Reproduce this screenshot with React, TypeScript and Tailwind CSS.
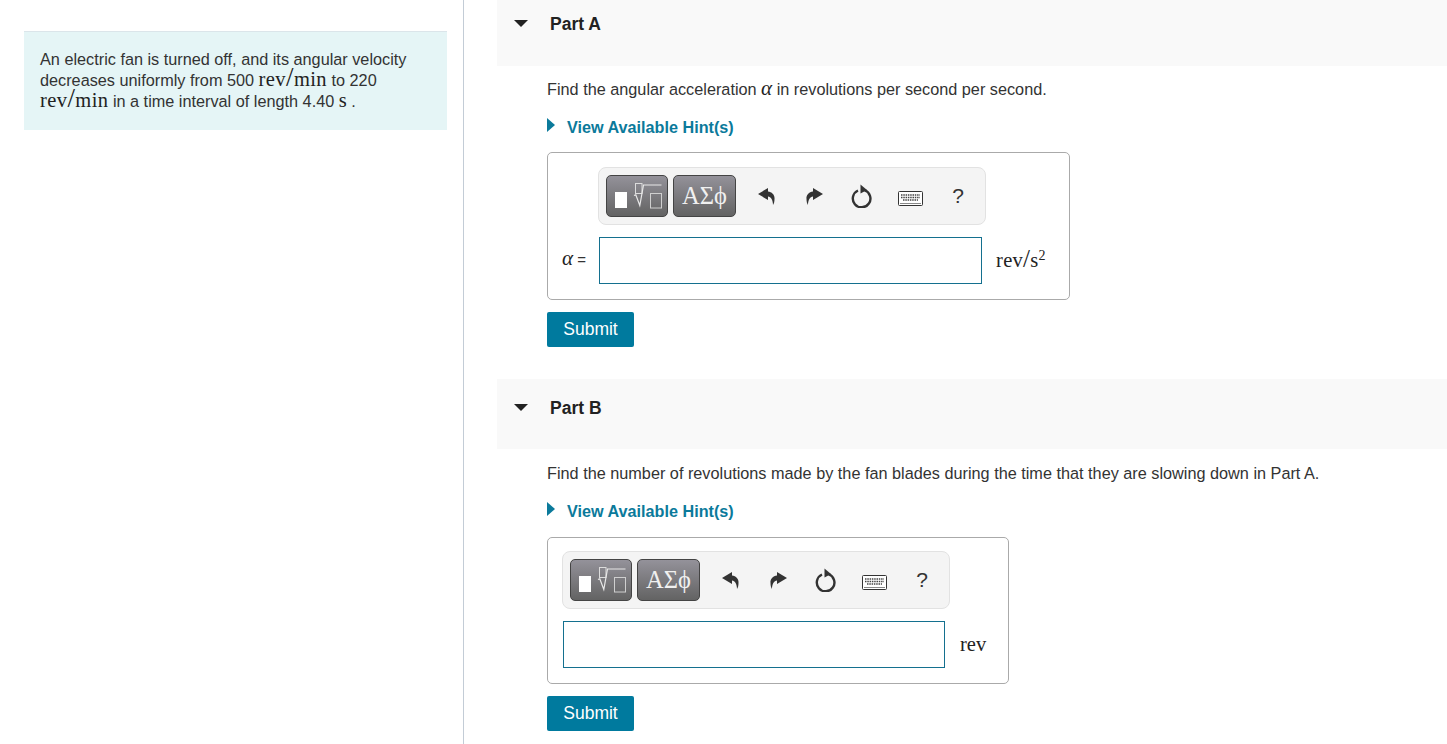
import React from 'react'

const mathFont = "font-['Liberation_Serif',serif] text-[#222]"

function TemplateIcon() {
  return (
    <svg width="60" height="40" viewBox="0 0 60 40" fill="none">
      <rect x="8" y="16" width="12" height="16" fill="#fff" />
      <rect x="28.500" y="7.500" width="6.500" height="10" stroke="#dcdcdc" />
      <path d="M27 19.500l1.800-.8 4 10.800 3.700-20.500h18" stroke="#e8e8e8" strokeWidth="1.200" />
      <rect x="43.500" y="17.500" width="11" height="14.500" stroke="#cfcfcf" />
    </svg>
  )
}

function UndoIcon({ flip }: { flip?: boolean }) {
  return (
    <svg width="17" height="17" viewBox="0 0 17 17" className={flip ? '-scale-x-100' : ''}>
      <path d="M0 6L10 0v3.500c4 .5 7 3.500 6.500 7.500 0 2.500-.5 4.500-1.500 6 0-5-2-8-5-8.500V12z" fill="#333" />
    </svg>
  )
}

function ResetIcon() {
  return (
    <svg width="22" height="24" viewBox="0 0 22 24" fill="none">
      <path d="M7 6.500a8.800 8.800 0 1 0 6.500-.3" stroke="#333" strokeWidth="2.400" />
      <path d="M9.500 .5l6.500 5.500-6.500 3.500z" fill="#333" />
    </svg>
  )
}

function KeyboardIcon() {
  return (
    <svg width="25" height="15" viewBox="0 0 25 15" fill="none" className="mt-[5px]">
      <rect x=".5" y=".5" width="24" height="14" rx="1" fill="#fff" stroke="#333" />
      <path d="M3 4h19M3 6.500h19" stroke="#444" strokeWidth="1.400" strokeDasharray="1.500 .8" />
      <path d="M5 9h15" stroke="#444" strokeWidth="1.400" strokeDasharray="1.500 .8" />
      <path d="M2 12.500h21" stroke="#888" />
    </svg>
  )
}

function Toolbar({ className }: { className: string }) {
  const btn = 'flex h-[42px] items-center justify-center rounded-[5px] border border-[#444] bg-linear-to-b from-[#94929a] to-[#636363]'
  const slot = 'flex w-[48px] items-center justify-center'
  return (
    <div className={`flex h-[58px] w-[388px] items-center rounded-lg border border-[#e2e2e2] bg-[#f4f4f4] pl-[7px] ${className}`}>
      <div className={`${btn} w-[62px]`}><TemplateIcon /></div>
      <div className={`${btn} ml-[5px] w-[63px] font-['Liberation_Serif',serif] text-[24.500px] text-[#f0f0f0]`}>ΑΣϕ</div>
      <div className="ml-[6px] flex">
        <div className={slot}><UndoIcon /></div>
        <div className={slot}><UndoIcon flip /></div>
        <div className={slot}><ResetIcon /></div>
        <div className={slot}><KeyboardIcon /></div>
        <div className={`${slot} text-[21px] text-[#333]`}>?</div>
      </div>
    </div>
  )
}

function Hint() {
  return (
    <div className="mt-[16px] flex h-[22px] items-center text-[16.200px] font-bold text-[#0b7a9b]">
      <svg width="8" height="14" viewBox="0 0 8 14" className="-mt-[4px]">
        <path d="M0 0l8 7-8 7z" fill="#0b7a9b" />
      </svg>
      <span className="ml-[12px]">View Available Hint(s)</span>
    </div>
  )
}

function PartHeader({ title, className }: { title: string; className: string }) {
  return (
    <div className={`flex items-start bg-[#f9f9f9] pl-[17px] ${className}`}>
      <svg width="14" height="7" viewBox="0 0 14 7" className="mt-[20px]">
        <path d="M0 0h14l-7 7z" fill="#222" />
      </svg>
      <span className="ml-[22px] mt-[12px] text-[17.500px] font-bold leading-[24px] text-[#222]">{title}</span>
    </div>
  )
}

function Submit() {
  return (
    <button className="mt-[12px] block h-[35px] w-[87px] rounded-[2px] bg-[#007a9e] text-[17.500px] text-white">Submit</button>
  )
}

function RevMin() {
  return (
    <span className={`${mathFont} text-[20.500px] leading-[0] tracking-[0.4px]`}>
      rev<span className="text-[27px] font-light leading-[0]">/</span>min
    </span>
  )
}

export default function App() {
  return (
    <div className="flex h-[744px] w-[1447px] overflow-hidden bg-white font-['Liberation_Sans',sans-serif] text-[16.250px] text-[#333]">
      <div className="h-full w-[464px] shrink-0 border-r border-[#c3ccd6] pl-[24px] pr-[16px] pt-[31px]">
        <div className="h-[99px] border-t border-[#dbe5ea] bg-[#e5f5f6] px-[16px] pt-[17px] leading-[21px]">
          An electric fan is turned off, and its angular velocity decreases uniformly from 500{' '}
          <RevMin /> to 220{' '}
          <RevMin /> in a time interval of length 4.40{' '}
          <span className={`${mathFont} text-[20.500px] leading-[0]`}>s</span> .
        </div>
      </div>

      <div className="ml-[33px] flex-1">
        <PartHeader title="Part A" className="h-[66px]" />
        <div className="pl-[50px]">
          <p className="mt-[12px] h-[22px] leading-[22px]">
            Find the angular acceleration <span className={`${mathFont} text-[21px] italic leading-[0]`}>α</span> in revolutions per second per second.
          </p>
          <Hint />
          <div className="mt-[14px] h-[148px] w-[523px] rounded-[5px] border border-[#aaa] pt-[14px]">
            <Toolbar className="ml-[50px]" />
            <div className="mt-[12px] flex items-center pl-[14px]">
              <span className="w-[37px] text-[15px]"><span className={`${mathFont} text-[21px] italic leading-[0]`}>α</span> =</span>
              <div className="h-[47px] w-[383px] border border-[#14708f]" />
              <span className={`${mathFont} ml-[14px] text-[20.500px] tracking-[0.3px]`}>
                rev<span className="text-[25px] font-light leading-none">/</span>s<sup className="text-[14px]">2</sup>
              </span>
            </div>
          </div>
          <Submit />
        </div>

        <PartHeader title="Part B" className="mt-[32px] h-[70px] pt-[5px]" />
        <div className="pl-[50px]">
          <p className="mt-[13px] h-[22px] leading-[22px]">
            Find the number of revolutions made by the fan blades during the time that they are slowing down in Part A.
          </p>
          <Hint />
          <div className="mt-[15px] h-[147px] w-[462px] rounded-[5px] border border-[#aaa] pt-[13px]">
            <Toolbar className="ml-[14px]" />
            <div className="mt-[12px] flex items-center pl-[15px]">
              <div className="h-[47px] w-[382px] border border-[#14708f]" />
              <span className={`${mathFont} ml-[15px] text-[20.500px]`}>rev</span>
            </div>
          </div>
          <Submit />
        </div>
      </div>
    </div>
  )
}
